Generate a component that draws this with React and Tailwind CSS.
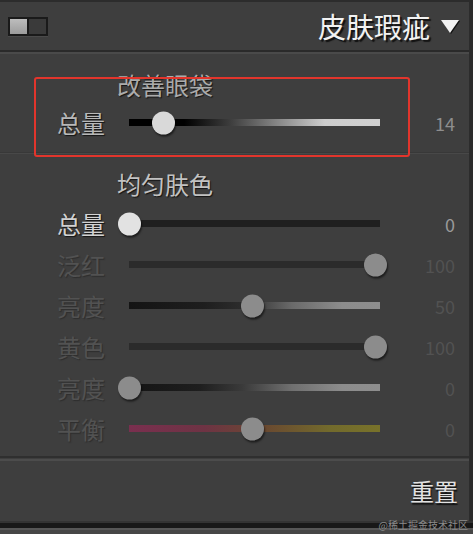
import React from 'react';

const font = { fontFamily: '"Noto Sans CJK SC", "Noto Sans", sans-serif' };

const rows = [
  {
    label: '总量',
    value: 0,
    labelColor: 'text-[#d2d2d2] [text-shadow:1px_1px_1px_#141414]',
    valueColor: 'text-[#9a9a9a]',
    track: 'bg-[#1f1f1f]',
    thumb: 'bg-[#e2e2e2]',
  },
  {
    label: '泛红',
    value: 100,
    labelColor: 'text-[#525252] [text-shadow:1px_1px_1px_#2e2e2e]',
    valueColor: 'text-[#525252]',
    track: 'bg-[#2b2b2b]',
    thumb: 'bg-[#8c8c8c]',
  },
  {
    label: '亮度',
    value: 50,
    labelColor: 'text-[#525252] [text-shadow:1px_1px_1px_#2e2e2e]',
    valueColor: 'text-[#525252]',
    track: 'bg-[linear-gradient(to_right,#141414_0%,#1e1e1e_30%,#2c2c2c_45%,#6a6a6a_65%,#8c8c8c_85%,#8e8e8e_100%)]',
    thumb: 'bg-[#8c8c8c]',
  },
  {
    label: '黄色',
    value: 100,
    labelColor: 'text-[#525252] [text-shadow:1px_1px_1px_#2e2e2e]',
    valueColor: 'text-[#525252]',
    track: 'bg-[#2b2b2b]',
    thumb: 'bg-[#8c8c8c]',
  },
  {
    label: '亮度',
    value: 0,
    labelColor: 'text-[#525252] [text-shadow:1px_1px_1px_#2e2e2e]',
    valueColor: 'text-[#525252]',
    track: 'bg-[linear-gradient(to_right,#141414_0%,#1e1e1e_28%,#3a3a3a_45%,#707070_65%,#8c8c8c_85%,#8e8e8e_100%)]',
    thumb: 'bg-[#8c8c8c]',
  },
  {
    // balance slider: centred at 0
    label: '平衡',
    value: 0,
    pos: 50,
    labelColor: 'text-[#525252] [text-shadow:1px_1px_1px_#2e2e2e]',
    valueColor: 'text-[#525252]',
    track: 'bg-[linear-gradient(to_right,#7a2f4f_0%,#6e3344_30%,#6a4a30_55%,#726a2c_80%,#78722a_100%)]',
    thumb: 'bg-[#8c8c8c]',
  },
];

function Slider({ pos, track, thumb }) {
  return (
    <div className="relative h-[7px] w-[251px]">
      <div className={`h-full w-full ${track}`} />
      <div
        className={`absolute top-1/2 h-[23px] w-[23px] -translate-y-1/2 rounded-full shadow-[1px_2px_2px_rgba(0,0,0,0.55)] ${thumb}`}
        style={{ left: `${(pos / 100) * 246 - 11}px` }}
      />
    </div>
  );
}

function Row({ label, value, pos, labelColor, valueColor, track, thumb }) {
  return (
    <div className="flex h-[41px] items-center pl-[57px]">
      <span className={`w-[72px] text-[24px] leading-none ${labelColor}`}>{label}</span>
      <Slider pos={pos ?? value} track={track} thumb={thumb} />
      <span className={`w-[75px] text-right text-[18px] leading-none ${valueColor}`}>{value}</span>
    </div>
  );
}

export default function App() {
  return (
    <div className="flex h-[534px] w-[473px] flex-col overflow-hidden bg-[#3e3e3e]" style={font}>
      <div className="flex flex-1">
        {/* Panel */}
        <div className="relative flex w-[469px] flex-col">
          <div className="h-[2px] bg-[#2c2c2c]" />

          {/* Header */}
          <div className="flex h-[48px] items-center justify-between pl-[8px] pr-[10px]">
            <div className="flex h-[19px] w-[40px] border-2 border-[#1a1a1a] shadow-[0_1px_0_#4a4a4a]">
              <div className="w-[19px] border-r-2 border-[#1a1a1a] bg-[linear-gradient(to_bottom,#bdbdbd,#9c9c9c)]" />
              <div className="flex-1 bg-[#3a3a3a]" />
            </div>
            <div className="flex items-center gap-[11px]">
              <span className="text-[28px] leading-none text-[#f2f2f2] [text-shadow:2px_2px_1px_#111]">
                皮肤瑕疵
              </span>
              <svg width="18" height="15" viewBox="0 0 18 15" className="drop-shadow-[1px_1px_0_#111]">
                <polygon points="0,1 18,1 9,14" fill="#f2f2f2" />
              </svg>
            </div>
          </div>
          <div className="h-[2px] bg-[#2a2a2a]" />
          <div className="h-[2px] bg-[#4a4a4a]" />

          {/* 改善眼袋 */}
          <div className="pt-[14px] pb-[9px]">
            <div className="flex h-[34px] items-center pl-[117px] text-[24px] leading-none text-[#ababab] [text-shadow:1px_1px_1px_#141414]">
              改善眼袋
            </div>
            <Row
              label="总量"
              value={14}
              labelColor="text-[#b8b8b8] [text-shadow:1px_1px_1px_#141414]"
              valueColor="text-[#8e8e8e]"
              track="bg-[linear-gradient(to_right,#000_0%,#000_22%,#3c3c3c_40%,#8a8a8a_60%,#cdcdcd_78%,#d0d0d0_100%)]"
              thumb="bg-[#d9d9d9]"
            />
          </div>
          <div className="h-px bg-[#383838]" />
          <div className="h-px bg-[#484848]" />

          {/* 均匀肤色 */}
          <div className="pt-[13px] pb-[7px]">
            <div className="mb-[2px] flex h-[34px] items-center pl-[117px] text-[24px] leading-none text-[#c2c2c2] [text-shadow:1px_1px_1px_#141414]">
              均匀肤色
            </div>
            {rows.map((row, i) => (
              <Row key={i} {...row} />
            ))}
          </div>
          <div className="h-[2px] bg-[#2f2f2f]" />
          <div className="h-px" />
          <div className="h-[2px] bg-[#4c4c4c]" />

          {/* Footer */}
          <div className="flex flex-1 items-center justify-end pr-[11px]">
            <span className="text-[24px] leading-none text-[#e2e2e2] [text-shadow:1px_2px_1px_#111]">重置</span>
          </div>

          {/* annotation box */}
          <div className="absolute left-[34px] top-[77px] h-[80px] w-[376px] rounded-[3px] border-2 border-[#e2352c]" />
        </div>
        <div className="w-[4px] bg-[#2c2c2c]" />
      </div>

      {/* Bottom edge */}
      <div className="relative">
        <div className="h-[2px] bg-[#333]" />
        <div className="h-[5px] bg-[#181818]" />
        <div className="h-[2px] bg-[#565656]" />
        <div className="h-[4px] bg-[#464646]" />
        <span className="absolute bottom-[4px] right-[5px] text-[10px] leading-none text-[#8a8a8a]">
          @稀土掘金技术社区
        </span>
      </div>
    </div>
  );
}
